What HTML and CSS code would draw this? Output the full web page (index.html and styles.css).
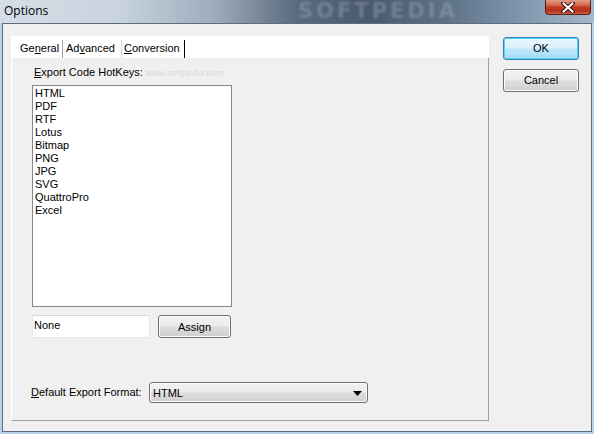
FILE: index.html
```html
<!DOCTYPE html>
<html>
<head>
<meta charset="utf-8">
<link rel="stylesheet" href="styles.css">
</head>
<body>
<div class="window">
  <div class="titlebar">
    <span class="title">Options</span>
    <span class="ghost">SOFTPEDIA</span>
    <div class="close">
      <svg width="14" height="11" viewBox="0 0 14 11"><path d="M2 1 L12 10 M12 1 L2 10" stroke="#3a1a14" stroke-width="4" stroke-linecap="square"/><path d="M2.5 1.5 L11.5 9.5 M11.5 1.5 L2.5 9.5" stroke="#ffffff" stroke-width="2" stroke-linecap="square"/></svg>
    </div>
  </div>
  <div class="client">
    <div class="main">
      <div class="tabs">
        <span class="tab t1">Ge<u>n</u>eral</span>
        <span class="tab t2">Ad<u>v</u>anced</span>
        <span class="tab t3"><u>C</u>onversion</span>
      </div>
      <div class="panel">
        <div class="label-row">
          <span class="label"><u>E</u>xport Code HotKeys:</span>
          <span class="wm">www.softpedia.com</span>
        </div>
        <div class="listbox">
          <div class="item">HTML</div>
          <div class="item">PDF</div>
          <div class="item">RTF</div>
          <div class="item">Lotus</div>
          <div class="item">Bitmap</div>
          <div class="item">PNG</div>
          <div class="item">JPG</div>
          <div class="item">SVG</div>
          <div class="item">QuattroPro</div>
          <div class="item">Excel</div>
        </div>
        <div class="assign-row">
          <div class="textbox">None</div>
          <div class="btn assign">Assign</div>
        </div>
        <div class="format-row">
          <div class="flabel"><u>D</u>efault Export Format:</div>
          <div class="combo">
            <span>HTML</span>
            <svg width="9" height="5" viewBox="0 0 9 5"><path d="M0 0 H9 L4.5 5 Z" fill="#000"/></svg>
          </div>
        </div>
      </div>
    </div>
    <div class="buttons">
      <div class="btn ok">OK</div>
      <div class="btn">Cancel</div>
    </div>
  </div>
</div>
</body>
</html>
```

FILE: styles.css
```css
* { box-sizing: border-box; }
html, body { margin: 0; padding: 0; }
body {
  width: 594px;
  height: 434px;
  overflow: hidden;
  font-family: "Liberation Sans", Arial, sans-serif;
  font-size: 11px;
  color: #000;
}
.window {
  width: 594px;
  height: 434px;
  background: #b9d1ea;
  display: flex;
  flex-direction: column;
}
.titlebar {
  position: relative;
  height: 23px;
  display: flex;
  justify-content: space-between;
  align-items: flex-start;
  background: linear-gradient(90deg, #d5dee7 0%, #c8d3dd 20%, #9dadbc 36%, #5a6a7d 50%, #4a5a6c 62%, #5d7187 75%, #8197ad 88%, #a3b7ca 100%);
  overflow: hidden;
}
.title {
  font-family: "Open Sans", "Liberation Sans", sans-serif;
  font-size: 12px;
  padding: 3px 0 0 4px;
  line-height: 15px;
  position: relative;
  z-index: 1;
}
.ghost {
  position: absolute;
  left: 298px;
  top: 0;
  height: 22px;
  line-height: 22px;
  font-family: "DejaVu Sans", sans-serif;
  font-weight: bold;
  font-size: 21px;
  letter-spacing: 3px;
  color: rgba(190, 205, 222, 0.28);
  filter: blur(1px);
}
.close {
  position: relative;
  z-index: 1;
  width: 46px;
  height: 16px;
  margin-right: 3px;
  margin-top: -1px;
  border: 1px solid #5b2318;
  border-top: none;
  border-radius: 0 0 4px 4px;
  background: linear-gradient(180deg, #e8a493 0%, #d36a53 40%, #c23a1f 55%, #b5301a 80%, #d0604a 100%);
  display: flex;
  align-items: center;
  justify-content: center;
  padding-top: 1px;
}
.client {
  flex: 1;
  margin: 0 2px 2px 2px;
  border: 1px solid #5c6d7e;
  background: #f0f0f0;
  display: flex;
  padding: 12px 12px 0 8px;
  gap: 14px;
}
.main {
  width: 478px;
  display: flex;
  flex-direction: column;
}
.tabs {
  height: 22px;
  background: #fff;
  display: flex;
  align-items: flex-end;
  padding-left: 9px;
}
.tab {
  display: block;
  height: 18px;
  line-height: 15px;
  padding-top: 1px;
}
.t1 { width: 43px; border-right: 1px solid #a0a0a0; }
.t2 { width: 59px; padding-left: 3px; border-right: 1px solid #d8d8d8; }
.t3 { width: 63px; padding-left: 2px; border-right: 1px solid #000; }
.panel {
  height: 363px;
  border-left: 1px solid #ffffff;
  border-right: 1px solid #a0a0a0;
  border-bottom: 1px solid #a0a0a0;
  padding-left: 20px;
  display: flex;
  flex-direction: column;
}
.label-row {
  margin-top: 8px;
  margin-left: 2px;
  height: 13px;
  line-height: 13px;
  display: flex;
  align-items: baseline;
  gap: 3px;
}
.wm {
  color: #dadada;
  font-size: 9px;
  line-height: 11px;
}
.listbox {
  margin-top: 6px;
  width: 200px;
  height: 222px;
  border: 1px solid #828790;
  background: #fff;
  padding: 1px 2px;
}
.item {
  height: 13px;
  line-height: 13px;
}
.assign-row {
  margin-top: 8px;
  display: flex;
  gap: 8px;
  height: 23px;
}
.textbox {
  width: 118px;
  height: 23px;
  background: #fff;
  border: 1px solid #e3e9ef;
  border-top-color: #d5d8dc;
  padding: 3px 1px;
  line-height: 13px;
}
.btn {
  width: 76px;
  height: 23px;
  border: 1px solid #707070;
  border-radius: 3px;
  background: linear-gradient(180deg, #f2f2f2 0%, #ebebeb 48%, #dddddd 52%, #cfcfcf 100%);
  box-shadow: inset 0 0 0 1px #fcfcfc;
  display: flex;
  align-items: center;
  justify-content: center;
  line-height: 13px;
}
.assign {
  width: 73px;
  padding-top: 2px;
}
.format-row {
  margin-top: 44px;
  display: flex;
  align-items: center;
  margin-left: -1px;
  gap: 7px;
}
.flabel {
  line-height: 13px;
  width: 111px;
}
.combo {
  width: 219px;
  height: 21px;
  border: 1px solid #707070;
  border-radius: 3px;
  background: linear-gradient(180deg, #f2f2f2 0%, #ebebeb 48%, #dddddd 52%, #cfcfcf 100%);
  box-shadow: inset 0 0 0 1px #fcfcfc;
  display: flex;
  align-items: center;
  justify-content: space-between;
  padding: 1px 5px 0 3px;
}
.buttons {
  display: flex;
  flex-direction: column;
  gap: 9px;
  padding-top: 1px;
}
.ok {
  border-color: #3c7fb1;
  background: linear-gradient(180deg, #eaf6fd 0%, #d9f0fc 48%, #bee6fd 52%, #a7d9f5 100%);
  box-shadow: inset 0 0 0 1px #48d8fb;
}
```
